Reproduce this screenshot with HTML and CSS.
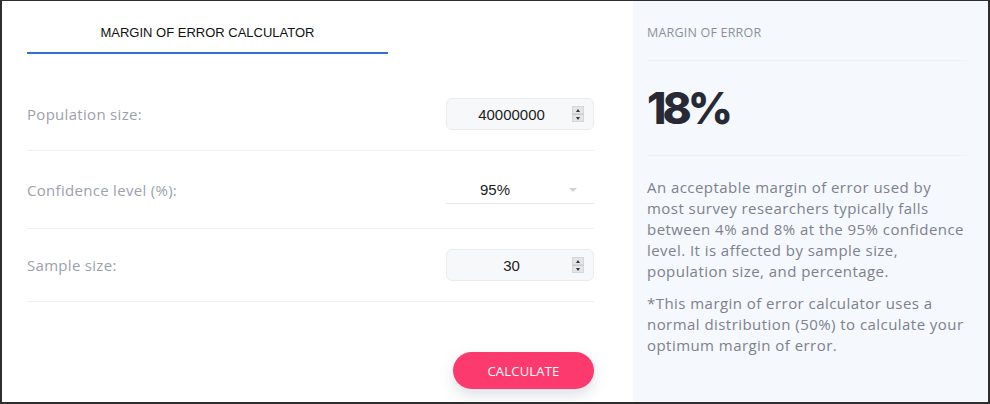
FILE: index.html
```html
<!DOCTYPE html>
<html lang="en">
<head>
  <meta charset="UTF-8">
  <meta name="viewport" content="width=device-width, initial-scale=1.0">
  <title>Margin of Error Calculator</title>
  <link rel="stylesheet" href="styles.css">
</head>
<body>
  <div class="frame">
    <div class="calc">
      <div class="tab">MARGIN OF ERROR CALCULATOR</div>

      <div class="row">
        <label for="population">Population size:</label>
        <div class="num-box">
          <input type="text" id="population" value="40000000">
          <span class="spin"><i class="up"></i><i class="down"></i></span>
        </div>
      </div>

      <div class="row row-select">
        <label for="confidence">Confidence level (%):</label>
        <div class="select-box">
          <select id="confidence">
            <option>90%</option>
            <option selected>95%</option>
            <option>99%</option>
          </select>
          <span class="caret"></span>
        </div>
      </div>

      <div class="row">
        <label for="sample">Sample size:</label>
        <div class="num-box">
          <input type="text" id="sample" value="30">
          <span class="spin"><i class="up"></i><i class="down"></i></span>
        </div>
      </div>

      <div class="actions">
        <button id="calculateBtn">CALCULATE</button>
      </div>
    </div>

    <div class="result">
      <div class="result-title">MARGIN OF ERROR</div>
      <div class="result-value">18%</div>
      <div class="result-text">
        <p>An acceptable margin of error used by most survey researchers typically falls between 4% and 8% at the 95% confidence level. It is affected by sample size, population size, and percentage.</p>
        <p>*This margin of error calculator uses a normal distribution (50%) to calculate your optimum margin of error.</p>
      </div>
    </div>
  </div>
</body>
</html>
```

FILE: styles.css
```css
body {
  margin: 0;
  padding: 0;
  font-family: 'Open Sans', sans-serif;
  background: #fff;
}
.frame {
  display: flex;
  height: 404px;
  border: 2px solid #2e2e2e;
  border-top-width: 1px;
  box-sizing: border-box;
}

/* Coluna da calculadora */
.calc {
  width: 631px;
  padding: 0 39px 0 25px;
  box-sizing: border-box;
}
.tab {
  width: 361px;
  padding: 23px 0 10px;
  line-height: 18px;
  font-family: 'Liberation Sans', Arial, sans-serif;
  font-size: 13px;
  color: #111;
  text-align: center;
  border-bottom: 2px solid #2f6fd6;
  margin-bottom: 24px;
}
.row {
  display: flex;
  align-items: center;
  justify-content: space-between;
  height: 72px;
  border-bottom: 1px solid #eef0f3;
}
.row-select {
  height: 77px;
}
.row:last-of-type {
  height: 71px;
}
label {
  font-size: 15px;
  letter-spacing: 0.3px;
  color: #9ca1ad;
}
.num-box {
  display: flex;
  align-items: center;
  width: 148px;
  height: 32px;
  box-sizing: border-box;
  background-color: #f7f8fa;
  border: 1px solid #e9ebef;
  border-radius: 6px;
  padding: 0 9px 0 10px;
}
.num-box input {
  flex: 1;
  min-width: 0;
  border: none;
  background: transparent;
  outline: none;
  font-family: 'Liberation Sans', Arial, sans-serif;
  font-size: 15px;
  color: #1d1d1d;
  text-align: center;
  padding: 0;
}
.spin {
  display: flex;
  flex-direction: column;
  width: 12px;
  margin-left: 6px;
}
.spin i {
  display: flex;
  align-items: center;
  justify-content: center;
  height: 6px;
  background-color: #e4e5e7;
  border: 1px solid #d5d6d9;
}
.spin .down {
  border-top-color: #c9cacd;
}
.spin i::before {
  content: '';
  border-left: 2.5px solid transparent;
  border-right: 2.5px solid transparent;
}
.spin .up::before {
  border-bottom: 3px solid #333;
}
.spin .down::before {
  border-top: 3px solid #333;
}
.select-box {
  display: flex;
  align-items: center;
  width: 148px;
  height: 27px;
  margin-top: 1px;
  border-bottom: 1px solid #e4e6ea;
}
.select-box select {
  flex: 1;
  appearance: none;
  border: none;
  background: transparent;
  outline: none;
  font-family: 'Liberation Sans', Arial, sans-serif;
  font-size: 15px;
  color: #1d1d1d;
  padding: 0 0 0 34px;
}
.caret {
  width: 0;
  height: 0;
  margin-right: 17px;
  border-left: 4px solid transparent;
  border-right: 4px solid transparent;
  border-top: 4px solid #cfd1d6;
}
.actions {
  display: flex;
  justify-content: flex-end;
  margin-top: 50px;
}
button {
  width: 141px;
  height: 37px;
  border: none;
  border-radius: 19px;
  background-color: #fd3a6d;
  color: #fff;
  font-family: 'Open Sans', sans-serif;
  font-size: 13px;
  letter-spacing: 0.2px;
  cursor: pointer;
  box-shadow: 0 6px 14px rgba(120, 130, 150, 0.25);
}

/* Coluna do resultado */
.result {
  flex: 1;
  background-color: #f5f8fc;
  padding: 0 21px 0 14px;
}
.result-title {
  padding: 23px 0 18px;
  line-height: 18px;
  font-size: 12.5px;
  letter-spacing: 0.2px;
  color: #8b909e;
  border-bottom: 1px solid #eceff3;
}
.result-value {
  padding: 24px 0;
  font-family: 'Inter', sans-serif;
  font-weight: 800;
  font-size: 44px;
  line-height: 46px;
  letter-spacing: -4px;
  color: #272a36;
  border-bottom: 1px solid #eceff3;
}
.result-text {
  padding-top: 21px;
}
.result-text p {
  margin: 0 0 11px;
  font-size: 15px;
  line-height: 21px;
  letter-spacing: 0.45px;
  color: #7c818f;
}
```
